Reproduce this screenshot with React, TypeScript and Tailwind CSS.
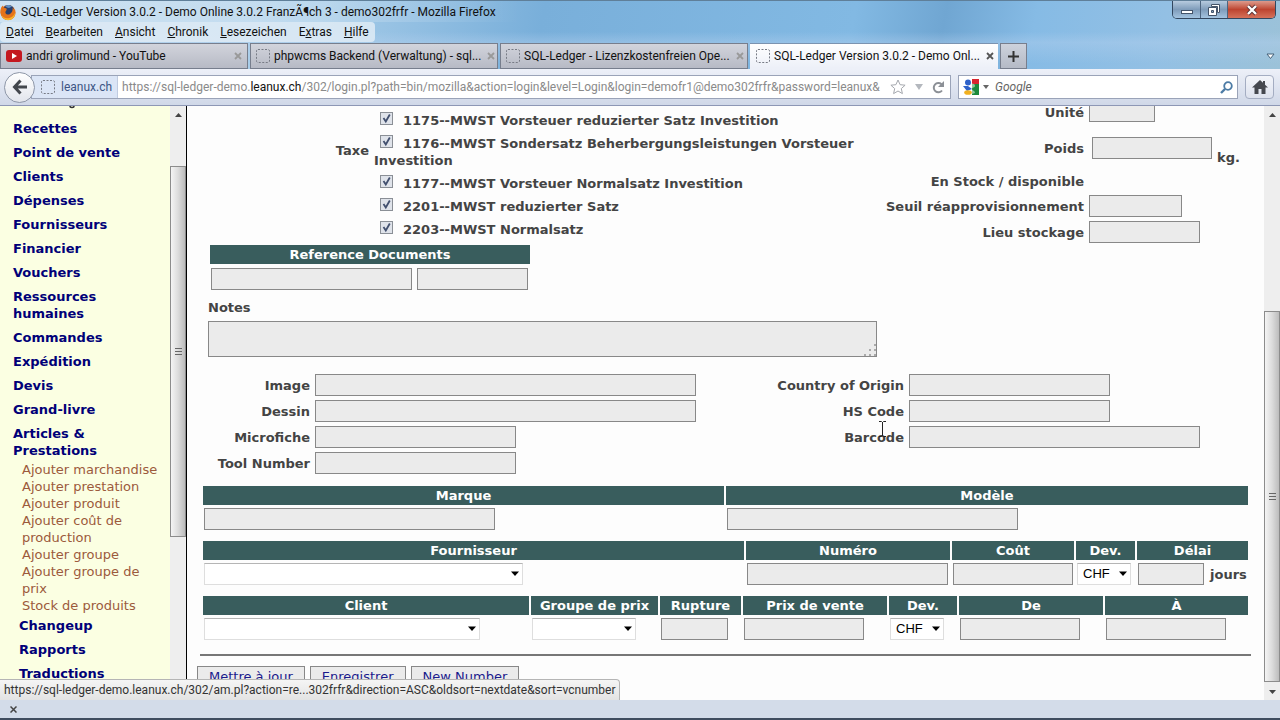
import { useState } from 'react'
import type { ReactNode } from 'react'

const MENU = ['Datei', 'Bearbeiten', 'Ansicht', 'Chronik', 'Lesezeichen', 'Extras', 'Hilfe']
const MENU_KEYS = [0, 0, 0, 0, 0, 1, 0]

const NAV = [
  'Recettes',
  'Point de vente',
  'Clients',
  'Dépenses',
  'Fournisseurs',
  'Financier',
  'Vouchers',
  'Ressources humaines',
  'Commandes',
  'Expédition',
  'Devis',
  'Grand-livre',
  'Articles & Prestations',
]

const SUB_NAV = [
  'Ajouter marchandise',
  'Ajouter prestation',
  'Ajouter produit',
  'Ajouter coût de production',
  'Ajouter groupe',
  'Ajouter groupe de prix',
  'Stock de produits',
]

const NAV_END = ['Changeup', 'Rapports', 'Traductions']

const TAXES = [
  '1175--MWST Vorsteuer reduzierter Satz Investition',
  '1176--MWST Sondersatz Beherbergungsleistungen Vorsteuer Investition',
  '1177--MWST Vorsteuer Normalsatz Investition',
  '2201--MWST reduzierter Satz',
  '2203--MWST Normalsatz',
]

const fieldClass = 'block h-[22px] border border-[#888] bg-[#ebebeb] px-1 outline-none'

function BlankIcon() {
  return (
    <svg className="h-[14px] w-[14px] shrink-0" viewBox="0 0 14 14">
      <rect x="0.5" y="0.5" width="13" height="13" rx="1.5" fill="none" stroke="#777b85" strokeDasharray="2 1.5" />
    </svg>
  )
}

function YoutubeIcon() {
  return (
    <svg className="h-3 w-4 shrink-0" viewBox="0 0 16 12">
      <rect width="16" height="12" rx="3" fill="#c4181f" />
      <path d="M6 3v6l5-3z" fill="#fff" />
    </svg>
  )
}

function FirefoxIcon() {
  return (
    <svg className="h-[18px] w-4 shrink-0" viewBox="0 0 16 18">
      <circle cx="8" cy="9.500" r="7.500" fill="#e2701a" />
      <circle cx="8.500" cy="7.500" r="5.500" fill="#27406f" />
      <path d="M5 3c2-1.500 5-1.500 7 .5L9 5 7 4.500z" fill="#5f8fc4" />
      <path d="M0.500 9C.3 5.500 1.500 3.500 3 2.500c0 1.500.8 2.300 2 2.500 1.300.2 2 .8 1.500 2C6 8.200 5 8.500 5.500 10c.7 1.800 3 2 4.500 1 2-1.400 3-3.500 2.500-6 2 1.500 3.200 3.800 2.800 6-.7 4-4 6-7.300 6-4.200 0-7.300-3.500-7.500-8z" fill="#e5731a" />
      <path d="M1.500 12c1.500 2.500 4.500 4 8 3 2.500-.7 4.500-2.500 5.500-5 .3 4-3 7.200-7 7.200-3 0-5.500-2-6.500-5.200z" fill="#f7b52c" />
    </svg>
  )
}

function Tab({ title, icon, active }: { title: string; icon: ReactNode; active?: boolean }) {
  return (
    <div
      className={
        active
          ? 'flex h-[26px] w-[248px] items-center gap-1 border-t border-b border-t-[#7b93b0] border-b-[#edf0f8] bg-linear-to-b from-white to-[#edf0f8] pl-[6px] pr-1'
          : 'flex h-[26px] w-[248px] items-center gap-1 border border-[#777e8d] bg-linear-to-b from-[#d2d4dc] to-[#b7bac5] pl-[5px] pr-[3px]'
      }
    >
      {icon}
      <span className="flex-1 whitespace-nowrap">{title}</span>
      <button type="button" aria-label="Tab schließen" className="flex h-3 w-3 shrink-0 items-center justify-center">
        <svg className={active ? 'h-2 w-2 text-[#555]' : 'h-2 w-2 text-[#999]'} viewBox="0 0 8 8">
          <path d="M1 1l6 6M7 1L1 7" stroke="currentColor" strokeWidth="1.800" />
        </svg>
      </button>
    </div>
  )
}

function WindowButtons() {
  return (
    <div className="mr-1 flex h-[18px] overflow-hidden rounded-b-[5px] border border-t-0 border-[#33475f] text-white">
      <button type="button" aria-label="Minimieren" className="flex w-7 items-center justify-center border-r border-[#4d6580] bg-linear-to-b from-[#b7cbdf] via-[#7f9cba] to-[#a3c3df]">
        <svg className="h-4 w-4" viewBox="0 0 16 16">
          <rect x="2.500" y="8.500" width="11" height="3" fill="#fff" stroke="#44546a" />
        </svg>
      </button>
      <button type="button" aria-label="Wiederherstellen" className="flex w-[27px] items-center justify-center border-r border-[#4d6580] bg-linear-to-b from-[#b7cbdf] via-[#7f9cba] to-[#a3c3df]">
        <svg className="h-[14px] w-[14px]" viewBox="0 0 14 14">
          <path d="M4.500 1.500h8v8h-2v-6h-6z" fill="#fff" stroke="#44546a" />
          <path fillRule="evenodd" d="M1.500 4.500h8v8h-8zM4.500 7.500v2h2v-2z" fill="#fff" stroke="#44546a" />
        </svg>
      </button>
      <button type="button" aria-label="Schließen" className="flex w-[47px] items-center justify-center bg-linear-to-b from-[#dc9a8c] via-[#bd4430] to-[#d5715a]">
        <svg className="h-3 w-3" viewBox="0 0 12 12">
          <path d="M2 2l8 8M10 2l-8 8" stroke="#573033" strokeWidth="4" />
          <path d="M2 2l8 8M10 2l-8 8" stroke="#fff" strokeWidth="2.400" />
        </svg>
      </button>
    </div>
  )
}

function BrowserHeader() {
  return (
    <header className="shrink-0 bg-[linear-gradient(180deg,transparent_30%,#b4d0ee66_40%,transparent_60%),linear-gradient(100deg,#b9d6ec_0%,#a5cbe8_25%,#79afda_42%,#82b9e3_66%,#70a6d2_73%,#86bbe5_80%,#93c0e4_90%,#9cc2d8_100%)] font-['Roboto','Noto_Sans',sans-serif] text-[12px] text-[#111]">
      <div className="flex h-[22px] items-start justify-between border-t border-[#5f7f99]">
        <div className="flex h-[21px] items-center gap-[5px] bg-linear-to-r from-white/30 via-white/30 to-transparent pr-6">
          <FirefoxIcon />
          <h1 className="whitespace-nowrap leading-5">SQL-Ledger Version 3.0.2 - Demo Online 3.0.2 FranzÃ¶ch 3 - demo302frfr - Mozilla Firefox</h1>
        </div>
        <WindowButtons />
      </div>
      <div className="flex h-[21px] items-start">
        <nav className="flex rounded-sm bg-[#e3edf6]/80">
          {MENU.map((item, i) => (
            <button key={item} type="button" className="px-[6px] leading-5">
              {item.slice(0, MENU_KEYS[i])}
              <u>{item[MENU_KEYS[i]]}</u>
              {item.slice(MENU_KEYS[i] + 1)}
            </button>
          ))}
        </nav>
      </div>
      <div className="flex h-[26px] items-stretch gap-[2px]">
        <Tab title="andri grolimund - YouTube" icon={<YoutubeIcon />} />
        <Tab title="phpwcms Backend (Verwaltung) - sql..." icon={<BlankIcon />} />
        <Tab title="SQL-Ledger - Lizenzkostenfreien Ope..." icon={<BlankIcon />} />
        <Tab title="SQL-Ledger Version 3.0.2 - Demo Onl..." icon={<BlankIcon />} active />
        <button type="button" aria-label="Neuer Tab" className="flex w-[27px] items-center justify-center border border-[#777e8d] bg-linear-to-b from-[#cdd2dc] to-[#b5bac6]">
          <svg className="h-[11px] w-[11px]" viewBox="0 0 11 11">
            <path d="M5.500 0v11M0 5.500h11" stroke="#333" strokeWidth="2" />
          </svg>
        </button>
        <button type="button" aria-label="Alle Tabs" className="ml-auto flex w-5 items-center justify-center">
          <svg className="h-[7px] w-[9px]" viewBox="0 0 9 7">
            <path d="M1 1h7L4.500 5.500z" fill="#fff" stroke="#456078" />
          </svg>
        </button>
      </div>
      <div className="flex h-[37px] items-center gap-[7px] border-b border-[#8d97b5] bg-linear-to-b from-[#edf0f8] to-[#d0d8e8] pl-1 pr-[6px]">
        <div className="flex min-w-0 flex-1 items-center">
          <button type="button" aria-label="Zurück" className="z-10 flex h-[31px] w-[31px] shrink-0 items-center justify-center rounded-full border border-[#8e97a8] bg-linear-to-b from-white to-[#e2e5ec]">
            <svg className="h-4 w-4" viewBox="0 0 16 16">
              <path d="M8.500 1.500L2.500 8l6 6.500M3 8h12" fill="none" stroke="#43474d" strokeWidth="3" />
            </svg>
          </button>
          <div className="-ml-1 flex h-6 min-w-0 flex-1 items-center border border-[#9aa3b8] bg-white">
            <div className="flex h-full items-center gap-[6px] border-r border-[#c0cbe0] bg-[#dbe5f6] pl-[9px] pr-[5px] text-[#3d5584]">
              <BlankIcon />
              <span>leanux.ch</span>
            </div>
            <div
              role="textbox"
              aria-label="Adresse"
              contentEditable
              suppressContentEditableWarning
              spellCheck={false}
              className="min-w-0 flex-1 overflow-hidden whitespace-nowrap pl-1 text-[#8a8a8a] outline-none"
            >
              https://sql-ledger-demo.<span className="text-[#111]">leanux.ch</span>/302/login.pl?path=bin/mozilla&amp;action=login&amp;level=Login&amp;login=demofr1@demo302frfr&amp;password=leanux&amp;
            </div>
            <div className="flex items-center gap-[9px] px-[5px]">
              <svg className="h-4 w-4" viewBox="0 0 16 16">
                <path d="M8 1l2.100 4.700 5 .5-3.800 3.400 1.100 5L8 12l-4.400 2.600 1.100-5L.9 6.200l5-.5z" fill="#fff" stroke="#a5a8ae" />
              </svg>
              <svg className="h-[6px] w-2" viewBox="0 0 8 6">
                <path d="M0 0h8L4 6z" fill="#b4b8be" />
              </svg>
              <svg className="h-[13px] w-[13px]" viewBox="0 0 13 13">
                <path d="M10 9.500A4.600 4.600 0 1 1 9.500 3.300" fill="none" stroke="#8c9096" strokeWidth="2" />
                <path d="M12 0v6H6z" fill="#8c9096" />
              </svg>
            </div>
          </div>
        </div>
        <label className="flex h-6 w-[280px] items-center border border-[#9aa3b8] bg-white px-1">
          <svg className="h-4 w-4" viewBox="0 0 16 16">
            <path d="M9 0h7v6H9z" fill="#d8242f" />
            <path d="M9 5h7v11H9z" fill="#1c8a3c" />
            <circle cx="5" cy="3.500" r="3" fill="#2f62c9" />
            <path d="M0 7h5l4 3-5 2z" fill="#2f62c9" />
            <ellipse cx="5" cy="13.500" rx="3.800" ry="2.300" fill="#f1b01f" />
            <path d="M9 4.500c2 0 3 1 3 2.500s-3 1.500-3 3 3 1.500 3 4l-3 1z" fill="#fff" opacity="0.500" />
          </svg>
          <svg className="ml-1 h-1 w-[6px]" viewBox="0 0 6 4">
            <path d="M0 0h6L3 4z" fill="#666" />
          </svg>
          <input type="search" aria-label="Suche" placeholder="Google" className="ml-[6px] min-w-0 flex-1 outline-none placeholder:italic placeholder:text-[#666]" />
          <svg className="h-[13px] w-[13px]" viewBox="0 0 13 13">
            <circle cx="8" cy="5" r="3.800" fill="none" stroke="#4c7ba5" strokeWidth="1.800" />
            <path d="M5 8l-4 4" stroke="#4c7ba5" strokeWidth="2.400" />
          </svg>
        </label>
        <button type="button" aria-label="Startseite" className="flex h-6 w-[29px] items-center justify-center rounded-sm border border-[#a4adc2] bg-linear-to-b from-[#f3f5fa] to-[#dde2ee]">
          <svg className="h-[14px] w-4" viewBox="0 0 16 14">
            <path d="M8 0L0 7.500h2.500V14H6.500V9h3v5h4V7.500H16L13 4.700V1h-2v1.800z" fill="#45484f" />
          </svg>
        </button>
      </div>
    </header>
  )
}

function Scrollbar({ before, thumb, after }: { before: number; thumb: number; after: number }) {
  return (
    <div className="flex w-4 shrink-0 flex-col bg-[#eeeeee]" aria-hidden="true">
      <div className="flex h-[17px] items-center justify-center">
        <svg className="h-1 w-[7px]" viewBox="0 0 7 4"><path d="M3.500 0L7 4H0z" fill="#444" /></svg>
      </div>
      <div style={{ flexGrow: before }} />
      <div style={{ flexGrow: thumb }} className="flex flex-col items-center justify-center gap-[2px] border border-[#8c8c8c] bg-linear-to-r from-[#f4f4f4] via-[#dcdcdc] to-[#bcbcbc]">
        <span className="h-px w-[7px] bg-[#666]" />
        <span className="h-px w-[7px] bg-[#666]" />
        <span className="h-px w-[7px] bg-[#666]" />
      </div>
      <div style={{ flexGrow: after }} />
      <div className="flex h-[17px] items-center justify-center">
        <svg className="h-1 w-[7px]" viewBox="0 0 7 4"><path d="M0 0h7L3.500 4z" fill="#444" /></svg>
      </div>
    </div>
  )
}

function Sidebar() {
  return (
    <nav className="h-full w-[170px] shrink-0 overflow-hidden bg-[#fbffe2] pl-[13px] font-bold text-[#000078]">
      <svg className="ml-14 h-[3px] w-[6px]" viewBox="0 0 6 3"><path d="M1 0c0 2 4 2 4 0" fill="none" stroke="#333" strokeWidth="1.500" /></svg>
      <ul className="flex flex-col gap-[7px] pt-[11px]">
        {NAV.map((item) => (
          <li key={item} className="w-32">
            <a href="#" className="block">{item}</a>
          </li>
        ))}
      </ul>
      <ul className="ml-[9px] w-[140px] pt-[2px] font-normal text-[#9c5a3c]">
        {SUB_NAV.map((item) => (
          <li key={item}>
            <a href="#" className="block">{item}</a>
          </li>
        ))}
      </ul>
      <ul className="ml-[6px] flex flex-col gap-[7px] pt-[3px]">
        {NAV_END.map((item) => (
          <li key={item}>
            <a href="#" className="block">{item}</a>
          </li>
        ))}
      </ul>
    </nav>
  )
}

function TaxRow({ label }: { label: string }) {
  const [checked, setChecked] = useState(true)
  return (
    <label className="block pt-[6px]">
      <span className="ml-[6px] mr-[10px] inline-grid align-top">
        <input
          type="checkbox"
          checked={checked}
          onChange={(e) => setChecked(e.target.checked)}
          className="col-start-1 row-start-1 h-[13px] w-[13px] appearance-none border border-[#8a8f96] bg-[#dfe3ea]"
        />
        {checked && (
          <svg className="pointer-events-none col-start-1 row-start-1 h-[13px] w-[13px]" viewBox="0 0 13 13">
            <path d="M3.500 6l2.300 3.500L9.800 2.500" fill="none" stroke="#42506f" strokeWidth="1.800" />
          </svg>
        )}
      </span>
      {label}
    </label>
  )
}

function Field({ id, label, labelWidth, width }: { id: string; label: string; labelWidth: string; width: string }) {
  return (
    <div className="flex items-center gap-[5px]">
      <label htmlFor={id} className={`${labelWidth} shrink-0 whitespace-nowrap text-right`}>{label}</label>
      <input id={id} type="text" className={`${fieldClass} ${width}`} />
    </div>
  )
}

function Select({ label, width, options }: { label: string; width: string; options: string[] }) {
  return (
    <div className={`relative ${width}`}>
      <select aria-label={label} className="h-[22px] w-full appearance-none border border-[#dedede] border-t-[#b5b5b5] bg-white pl-[5px] font-['Liberation_Sans',sans-serif] text-[13px] leading-5 font-normal text-black">
        {options.map((o) => (
          <option key={o}>{o}</option>
        ))}
      </select>
      <svg className="pointer-events-none absolute right-1 top-2 h-[6px] w-2" viewBox="0 0 8 6">
        <path d="M0 0.500h8L4 5z" fill="#000" />
      </svg>
    </div>
  )
}

type Column = { title: string; col: string; control: ReactNode }

function text(label: string, width: string) {
  return <input type="text" aria-label={label} className={`${fieldClass} ${width}`} />
}

const MAKE_COLUMNS: Column[] = [
  { title: 'Marque', col: 'w-[521px]', control: text('Marque', 'w-[291px]') },
  { title: 'Modèle', col: 'w-[522px]', control: text('Modèle', 'w-[291px]') },
]

const VENDOR_COLUMNS: Column[] = [
  { title: 'Fournisseur', col: 'w-[541px]', control: <Select label="Fournisseur" width="w-[319px]" options={['']} /> },
  { title: 'Numéro', col: 'w-[204px]', control: text('Numéro', 'w-[201px]') },
  { title: 'Coût', col: 'w-[122px]', control: text('Coût', 'w-[120px]') },
  { title: 'Dev.', col: 'w-[59px]', control: <Select label="Devise du coût" width="w-[54px]" options={['CHF']} /> },
  {
    title: 'Délai',
    col: 'w-[111px]',
    control: (
      <label className="flex items-center gap-[6px]">
        <input type="text" className={`${fieldClass} w-[66px]`} />
        jours
      </label>
    ),
  },
]

const CUSTOMER_COLUMNS: Column[] = [
  { title: 'Client', col: 'w-[326px]', control: <Select label="Client" width="w-[276px]" options={['']} /> },
  { title: 'Groupe de prix', col: 'w-[127px]', control: <Select label="Groupe de prix" width="w-[104px]" options={['']} /> },
  { title: 'Rupture', col: 'w-[81px]', control: text('Rupture', 'w-[67px]') },
  { title: 'Prix de vente', col: 'w-[144px]', control: text('Prix de vente', 'w-[120px]') },
  { title: 'Dev.', col: 'w-[68px]', control: <Select label="Devise de vente" width="w-[54px]" options={['CHF']} /> },
  { title: 'De', col: 'w-[144px]', control: text('De', 'w-[120px]') },
  { title: 'À', col: 'w-[143px]', control: text('À', 'w-[120px]') },
]

function EntryTable({ columns }: { columns: Column[] }) {
  return (
    <table className="mt-[11px] w-full table-fixed border-separate border-spacing-x-[2px] border-spacing-y-0">
      <thead>
        <tr className="h-[19px] text-white">
          {columns.map((c) => (
            <th key={c.title} className={`${c.col} whitespace-nowrap bg-[#395d5d] p-0`}>{c.title}</th>
          ))}
        </tr>
      </thead>
      <tbody>
        <tr>
          {columns.map((c) => (
            <td key={c.title} className="p-0 pl-px pt-[3px]">{c.control}</td>
          ))}
        </tr>
      </tbody>
    </table>
  )
}

function PartForm() {
  return (
    <form className="min-w-0 flex-1 overflow-hidden bg-[#fdfdfd] font-bold text-[#444]" onSubmit={(e) => e.preventDefault()}>
      <div className="flex">
        <fieldset className="flex min-w-0 flex-1 gap-[5px]">
          <div className="w-[182px] shrink-0 pt-9 text-right">Taxe</div>
          <div className="max-w-[485px]">
            {TAXES.map((t) => (
              <TaxRow key={t} label={t} />
            ))}
          </div>
        </fieldset>
        <div className="w-[380px] shrink-0">
          <div className="flex gap-[5px]">
            <label htmlFor="unit" className="w-[200px] text-right leading-[14px]">Unité</label>
            <input id="unit" type="text" className="h-4 w-[66px] border border-t-0 border-[#888] bg-[#ebebeb] px-1 outline-none" />
          </div>
          <div className="mt-[15px] flex h-9 gap-[5px]">
            <label htmlFor="weight" className="w-[200px] pt-[3px] text-right">Poids</label>
            <input id="weight" type="text" className={`${fieldClass} ml-[3px] w-[120px]`} />
            <span className="pt-3">kg.</span>
          </div>
          <div className="mb-1 h-[18px] w-[200px] text-right">En Stock / disponible</div>
          <div className="flex flex-col gap-1">
            <Field id="rop" label="Seuil réapprovisionnement" labelWidth="w-[200px]" width="w-[93px]" />
            <Field id="bin" label="Lieu stockage" labelWidth="w-[200px]" width="w-[111px]" />
          </div>
        </div>
      </div>

      <div className="ml-[23px] mt-[2px] w-80">
        <h2 className="h-[19px] bg-[#395d5d] text-center leading-5 text-white">Reference Documents</h2>
        <div className="flex gap-[5px] pl-px pt-1">
          <input type="text" aria-label="Description du document" className={`${fieldClass} w-[201px]`} />
          <input type="text" aria-label="Fichier du document" className={`${fieldClass} w-[111px]`} />
        </div>
      </div>

      <div className="ml-[21px] mt-[9px]">
        <label htmlFor="notes" className="block">Notes</label>
        <div className="relative mt-[5px] max-w-[669px]">
          <textarea id="notes" className="block h-9 w-full resize-none border border-[#888] bg-[#ebebeb] outline-none" />
          <svg className="pointer-events-none absolute bottom-px right-px h-3 w-3" viewBox="0 0 12 12" fill="#aaa">
            <path d="M10 0h2v2h-2zM10 5h2v2h-2zM5 5h2v2H5zM10 10h2v2h-2zM5 10h2v2H5zM0 10h2v2H0z" />
          </svg>
        </div>
      </div>

      <div className="mt-[17px] flex justify-between">
        <div className="flex flex-col gap-1">
          <Field id="image" label="Image" labelWidth="w-[123px]" width="w-[381px]" />
          <Field id="drawing" label="Dessin" labelWidth="w-[123px]" width="w-[381px]" />
          <Field id="microfiche" label="Microfiche" labelWidth="w-[123px]" width="w-[201px]" />
          <Field id="toolnumber" label="Tool Number" labelWidth="w-[123px]" width="w-[201px]" />
        </div>
        <div className="relative flex w-[488px] flex-col gap-1">
          <Field id="origin" label="Country of Origin" labelWidth="w-[128px]" width="w-[201px]" />
          <Field id="hscode" label="HS Code" labelWidth="w-[128px]" width="w-[201px]" />
          <Field id="barcode" label="Barcode" labelWidth="w-[128px]" width="w-[291px]" />
          {/* text cursor over the barcode label */}
          <svg className="pointer-events-none absolute left-[103px] top-[47px] h-4 w-[7px]" viewBox="0 0 7 16">
            <path d="M0 .5h2.500l1 1 1-1H7M3.500 1v14M0 15.500h2.500l1-1 1 1H7" fill="none" stroke="#222" />
          </svg>
        </div>
      </div>

      <div className="mx-[14px] pt-px">
        <EntryTable columns={MAKE_COLUMNS} />
        <EntryTable columns={VENDOR_COLUMNS} />
        <EntryTable columns={CUSTOMER_COLUMNS} />
      </div>

      <hr className="mx-[13px] mt-[14px] border-t-2 border-[#777]" />
      <div className="ml-[10px] mt-[10px] flex gap-[5px]">
        {['Mettre à jour', 'Enregistrer', 'New Number'].map((b) => (
          <button key={b} type="submit" className="h-[22px] border border-[#888] bg-[#ebebeb] px-[11px] leading-5 font-normal text-[#1a1a8c]">
            {b}
          </button>
        ))}
      </div>
    </form>
  )
}

export default function App() {
  return (
    <div className="flex h-screen flex-col overflow-hidden">
      <BrowserHeader />
      <main className="relative flex min-h-0 flex-1 font-['DejaVu_Sans',sans-serif] text-[13px] leading-[17px]">
        <Sidebar />
        <Scrollbar before={44} thumb={368} after={148} />
        <div className="w-px bg-black" />
        <PartForm />
        <Scrollbar before={191} thumb={369} after={1} />
        <div className="absolute bottom-0 left-0 h-[21px] whitespace-nowrap rounded-tr-sm border border-b-0 border-l-0 border-[#b5b5b5] bg-linear-to-b from-[#f5f5f5] to-[#e3e3e3] px-1 font-['Roboto','Noto_Sans',sans-serif] text-[12px] leading-5 text-[#333]">
          https://sql-ledger-demo.leanux.ch/302/am.pl?action=re...302frfr&amp;direction=ASC&amp;oldsort=nextdate&amp;sort=vcnumber
        </div>
      </main>
      <footer className="h-5 shrink-0 border-b-2 border-[#3f4d5f] bg-[#d3dce9] pl-[5px]">
        <button type="button" aria-label="Leiste schließen" className="flex h-[18px] w-4 items-center justify-center">
          <svg className="h-[7px] w-[7px]" viewBox="0 0 7 7">
            <path d="M0.500 0.500l6 6M6.500 0.500l-6 6" stroke="#444" strokeWidth="1.500" />
          </svg>
        </button>
      </footer>
    </div>
  )
}
